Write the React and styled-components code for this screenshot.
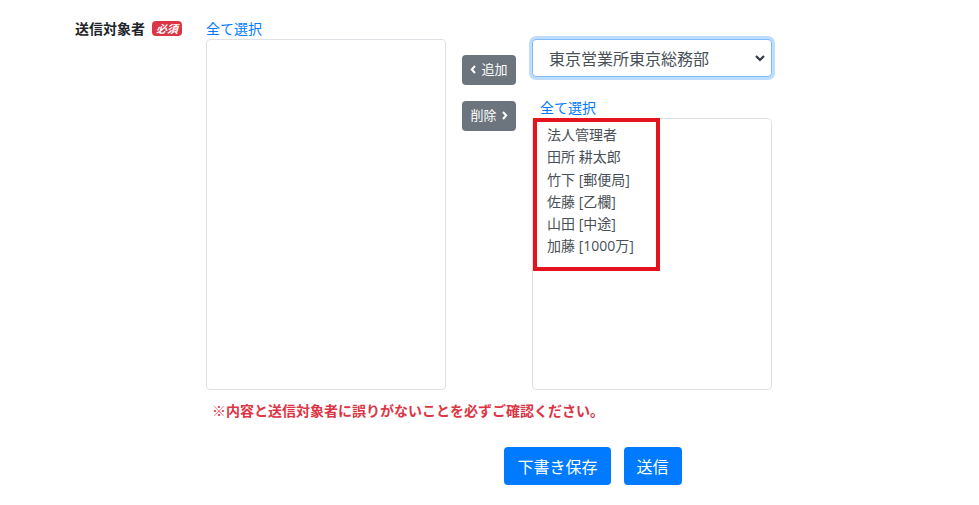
import React from "react";
import styled, { createGlobalStyle } from "styled-components";

const Global = createGlobalStyle`
  html, body { margin: 0; padding: 0; background: #fff; }
  body {
    font-family: "Open Sans", "Noto Sans CJK JP", sans-serif;
    color: #212529;
    font-size: 14px;
  }
  * { box-sizing: border-box; }
`;

const Page = styled.div`
  padding-top: 18px;
  width: 979px;
`;

const FormRow = styled.div`
  display: flex;
  padding-left: 75px;
`;

const LabelCol = styled.div`
  width: 131px;
  flex: none;
  display: flex;
  gap: 7px;
  height: 21px;
  align-items: center;
`;

const Label = styled.span`
  font-weight: 700;
  font-size: 14px;
  line-height: 21px;
`;

const Badge = styled.span`
  display: inline-flex;
  align-items: center;
  justify-content: center;
  height: 15px;
  padding: 0 4px;
  background: #dc3545;
  color: #fff;
  border-radius: 4px;
  font-size: 11px;
  font-weight: 700;
  font-style: italic;
  line-height: 1;
`;

const Content = styled.div`
  flex: 1;
  display: flex;
  flex-direction: column;
`;

const Picker = styled.div`
  display: flex;
  gap: 16px;
`;

const Column = styled.div`
  width: 240px;
  display: flex;
  flex-direction: column;
  padding-top: ${(p) => p.$offset || 0}px;
`;

const Link = styled.a`
  color: #007bff;
  font-size: 14px;
  line-height: 21px;
  height: 21px;
  text-decoration: none;
  cursor: pointer;
  padding-left: ${(p) => p.$indent || 0}px;
`;

const ListBox = styled.div`
  position: relative;
  height: ${(p) => p.$h}px;
  border: 1px solid #dee2e6;
  border-radius: 4px;
  padding: 5px 14px;
  background: #fff;
`;

const Item = styled.div`
  font-size: 14px;
  line-height: 22.3px;
  color: #495057;
  white-space: nowrap;
`;

const Highlight = styled.div`
  position: absolute;
  left: 0;
  top: -1px;
  width: 127px;
  height: 153px;
  border: 4px solid #e5131d;
  pointer-events: none;
`;

const ButtonCol = styled.div`
  display: flex;
  flex-direction: column;
  gap: 16px;
  padding-top: 37px;
`;

const MoveButton = styled.button`
  width: 54px;
  height: 30px;
  display: flex;
  align-items: center;
  justify-content: center;
  gap: 4px;
  background: #6c757d;
  color: #fff;
  border: none;
  border-radius: 4px;
  font-family: inherit;
  font-size: 13px;
  line-height: 1;
  padding: 0 0 2px;
  cursor: pointer;
`;

const Select = styled.div`
  height: 38px;
  margin-bottom: 20px;
  border: 1px solid #80bdff;
  border-radius: 4px;
  box-shadow: 0 0 0 3px rgba(0, 123, 255, 0.25);
  display: flex;
  align-items: center;
  justify-content: space-between;
  padding: 0 5px 0 16px;
  color: #495057;
  font-size: 16px;
  background: #fff;
`;

const Warning = styled.div`
  margin-top: 10px;
  padding-left: 6px;
  color: #dc3545;
  font-weight: 700;
  font-size: 14px;
  line-height: 21px;
`;

const Actions = styled.div`
  margin-top: 26px;
  display: flex;
  justify-content: center;
  gap: 13px;
  padding-left: 1px;
`;

const PrimaryButton = styled.button`
  height: 38px;
  padding: 0 13px;
  background: #007bff;
  color: #fff;
  border: none;
  border-radius: 4px;
  font-family: inherit;
  font-size: 16px;
  cursor: pointer;
`;

const Chevron = ({ dir }) => (
  <svg width="7" height="9" viewBox="0 0 7 9">
    <path
      d={dir === "left" ? "M5 1 L1.8 4.5 L5 8" : "M2 1 L5.2 4.5 L2 8"}
      fill="none"
      stroke="#fff"
      strokeWidth="2"
    />
  </svg>
);

const SelectArrow = () => (
  <svg width="12" height="10" viewBox="0 0 12 10">
    <path d="M2 3 L6 7 L10 3" fill="none" stroke="#343a40" strokeWidth="2.2" />
  </svg>
);

const members = [
  "法人管理者",
  "田所 耕太郎",
  "竹下 [郵便局]",
  "佐藤 [乙欄]",
  "山田 [中途]",
  "加藤 [1000万]",
];

export default function App() {
  return (
    <Page>
      <Global />
      <FormRow>
        <LabelCol>
          <Label>送信対象者</Label>
          <Badge>必須</Badge>
        </LabelCol>
        <Content>
          <Picker>
            <Column>
              <Link>全て選択</Link>
              <ListBox $h={351} />
            </Column>
            <ButtonCol>
              <MoveButton>
                <Chevron dir="left" />
                追加
              </MoveButton>
              <MoveButton>
                削除
                <Chevron dir="right" />
              </MoveButton>
            </ButtonCol>
            <Column $offset={21}>
              <Select>
                <span>東京営業所東京総務部</span>
                <SelectArrow />
              </Select>
              <Link $indent={8}>全て選択</Link>
              <ListBox $h={272}>
                {members.map((m) => (
                  <Item key={m}>{m}</Item>
                ))}
                <Highlight />
              </ListBox>
            </Column>
          </Picker>
          <Warning>※内容と送信対象者に誤りがないことを必ずご確認ください。</Warning>
          <Actions>
            <PrimaryButton>下書き保存</PrimaryButton>
            <PrimaryButton>送信</PrimaryButton>
          </Actions>
        </Content>
      </FormRow>
    </Page>
  );
}
